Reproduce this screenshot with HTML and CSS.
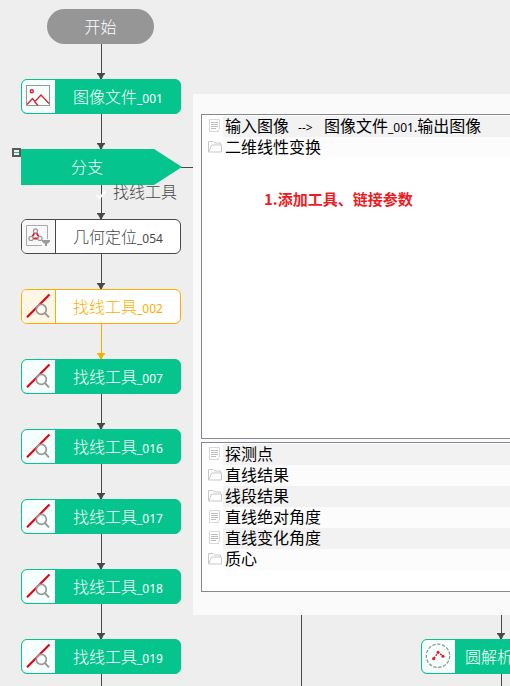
FILE: index.html
```
<!DOCTYPE html>
<html lang="zh-CN">
<head>
<meta charset="utf-8">
<title>流程图</title>
<link rel="stylesheet" href="styles.css">
</head>
<body>
<svg class="defs" width="0" height="0" aria-hidden="true">
  <symbol id="arrow" viewBox="0 0 8 7"><path d="M0 0H8V1.5H7L5 5.5V7H3V5.5L1 1.5H0Z"/></symbol>
  <symbol id="i-line" viewBox="0 0 33 33">
    <path d="M5 27.3 27.5 4.500" stroke="#e60012" stroke-width="2.1" fill="none"/>
    <circle cx="19.3" cy="19.4" r="5" fill="#fff" fill-opacity=".5" stroke="#999" stroke-width="1.7"/>
    <path d="M23 23.100 27 27.400" stroke="#999" stroke-width="2"/>
  </symbol>
  <symbol id="i-image" viewBox="0 0 33 33">
    <path d="M4.5 5.500H27.5V25.500H4.5Z" fill="none" stroke="#999" stroke-width="1.1"/>
    <circle cx="9.8" cy="11.3" r="1.5" fill="none" stroke="#e21f30" stroke-width="1.4"/>
    <path d="M5 24.500 10.5 18.500 13 21.500 19 15 27 23.500M12.5 21.500 16 25.500" fill="none" stroke="#e21f30" stroke-width="1.3"/>
  </symbol>
  <symbol id="i-locate" viewBox="0 0 33 33">
    <path d="M4.5 25.5V5.5H25.5V19M4.5 25.5H20" fill="none" stroke="#aaa"/>
    <path d="M13.5 11.5 9 18.5H18Z" fill="none" stroke="#e21f30" stroke-width="1.8"/>
    <g fill="#f5eeee" stroke="#999" stroke-width="1.1"><circle cx="13.5" cy="11" r="2.1"/><circle cx="9" cy="18.4" r="2.1"/><circle cx="18" cy="18.4" r="2.1"/></g>
    <path d="M20 20H28V21.500L26 23.500H25V26H23V23.500H22L20 21.500Z" fill="#999"/>
  </symbol>
  <symbol id="i-circle" viewBox="0 0 33 33">
    <circle cx="16" cy="15.8" r="11.7" fill="none" stroke="#999" stroke-width="1.3" stroke-dasharray="3.4 1.5"/>
    <path d="M12 18.500 16 12.500 21 16" fill="none" stroke="#e6192b" stroke-width="1.3" stroke-dasharray="2.2 1"/>
    <g fill="#e6192b"><circle cx="11.7" cy="18.700" r="1.6"/><circle cx="16" cy="12.200" r="1.5"/><circle cx="21" cy="16.200" r="1.5"/></g>
  </symbol>
  <symbol id="i-doc" viewBox="0 0 14 14">
    <path d="M1.5 .5H11.5V10M1.5 .5V12.5H11M11.5 10 9 12.5" fill="none" stroke="#d8d8d8"/>
    <path d="M3 3.5H10M3 5.5H10M3 7.5H10M3 9.5H8" stroke="#bdbdbd"/>
  </symbol>
  <symbol id="i-folder" viewBox="0 0 14 14">
    <path d="M.5 12V1.5H5L6.5 3H12.5V5M.5 12H13.5V5H3.5L1 11.500" fill="none" stroke="#c9c9c9"/>
  </symbol>
</svg>

<main class="canvas">
  <svg class="wires" width="510" height="686" aria-hidden="true">
    <g class="wire">
      <path d="M101.5 44V75M101.5 114V145M101.5 185V215M101.5 254V285M101.5 394V425M101.5 464V495M101.5 534V565M101.5 604V635M101.5 674V686M181 167.5H194M301.5 614V686M501.5 614V635M501.5 674V686"/>
    </g>
    <g class="wire wire-active"><path d="M101.5 324V355"/></g>
    <g class="heads">
      <use href="#arrow" x="97" y="73" width="8" height="7"/>
      <use href="#arrow" x="97" y="143" width="8" height="7"/>
      <use href="#arrow" x="97" y="213" width="8" height="7"/>
      <use href="#arrow" x="97" y="283" width="8" height="7"/>
      <use href="#arrow" class="head-active" x="97" y="353" width="8" height="7"/>
      <use href="#arrow" x="97" y="423" width="8" height="7"/>
      <use href="#arrow" x="97" y="493" width="8" height="7"/>
      <use href="#arrow" x="97" y="563" width="8" height="7"/>
      <use href="#arrow" x="97" y="633" width="8" height="7"/>
      <use href="#arrow" x="497" y="633" width="8" height="7"/>
    </g>
    <path class="branch-shape" d="M21 149H154L182 167 154 185H21Z"/>
    <path class="check" d="M96.500 195 99.500 198 105.500 191.500"/>
    <path class="toggle" d="M13 149H20V156H13Z"/>
    <path class="toggle-bar" d="M14 152.500H19"/>
  </svg>

  <div class="start">开始</div>
  <div class="branch">分支</div>
  <div class="wire-label">找线工具</div>

  <div class="node n1"><svg class="icon"><use href="#i-image"/></svg><span class="name">图像文件<small>_001</small></span></div>
  <div class="node plain n3"><svg class="icon"><use href="#i-locate" width="33" height="33"/></svg><span class="name">几何定位<small>_054</small></span></div>
  <div class="node active n4"><svg class="icon"><use href="#i-line" width="33" height="33"/></svg><span class="name">找线工具<small>_002</small></span></div>
  <div class="node n5"><svg class="icon"><use href="#i-line"/></svg><span class="name">找线工具<small>_007</small></span></div>
  <div class="node n6"><svg class="icon"><use href="#i-line"/></svg><span class="name">找线工具<small>_016</small></span></div>
  <div class="node n7"><svg class="icon"><use href="#i-line"/></svg><span class="name">找线工具<small>_017</small></span></div>
  <div class="node n8"><svg class="icon"><use href="#i-line"/></svg><span class="name">找线工具<small>_018</small></span></div>
  <div class="node n9"><svg class="icon"><use href="#i-line"/></svg><span class="name">找线工具<small>_019</small></span></div>
  <div class="node n10"><svg class="icon"><use href="#i-circle"/></svg><span class="name">圆解析</span></div>

  <section class="popup">
    <div class="list inputs">
      <div class="row"><svg class="mark"><use href="#i-doc"/></svg><span class="text">输入图像<small class="link">--&gt;</small>图像文件<small>_001.</small>输出图像</span></div>
      <div class="row"><svg class="mark"><use href="#i-folder"/></svg><span class="text">二维线性变换</span></div>
      <p class="note">1.添加工具、链接参数</p>
    </div>
    <div class="list outputs">
      <div class="row"><svg class="mark"><use href="#i-doc"/></svg><span class="text">探测点</span></div>
      <div class="row"><svg class="mark"><use href="#i-folder"/></svg><span class="text">直线结果</span></div>
      <div class="row"><svg class="mark"><use href="#i-folder"/></svg><span class="text">线段结果</span></div>
      <div class="row"><svg class="mark"><use href="#i-doc"/></svg><span class="text">直线绝对角度</span></div>
      <div class="row"><svg class="mark"><use href="#i-doc"/></svg><span class="text">直线变化角度</span></div>
      <div class="row"><svg class="mark"><use href="#i-folder"/></svg><span class="text">质心</span></div>
    </div>
  </section>
</main>
</body>
</html>
```
FILE: styles.css
```
* { box-sizing: border-box; }
body {
  margin: 0;
  font: 300 16px/20px "Noto Sans CJK SC", "Noto Sans", sans-serif;
}
small { font: 400 12px/1 "Noto Sans", sans-serif; }
.defs { position: absolute; }
.canvas {
  position: relative;
  width: 510px;
  height: 686px;
  overflow: hidden;
  background: #eee;
  white-space: nowrap;
}
.wires { display: block; }
.wire { stroke: #484848; fill: none; }
.wire-active { stroke: #faaf00; }
.heads { fill: #484848; }
.head-active { fill: #faaf00; }
.branch-shape { fill: #05c48d; }
.check { fill: none; stroke: #fff; stroke-width: 2; }
.toggle { fill: #eee; stroke: #5a5a5a; stroke-width: 2; }
.toggle-bar { stroke: #05c48d; }

.start, .branch {
  position: absolute;
  display: flex;
  align-items: center;
  justify-content: center;
  padding-bottom: 2px;
  color: #fff;
}
.start {
  left: 47px;
  top: 9px;
  width: 107px;
  height: 35px;
  border-radius: 18px;
  background: #969696;
}
.branch { left: 21px; top: 149px; width: 132px; height: 36px; }
.wire-label { position: absolute; left: 113px; top: 181px; color: #484848; }

.node {
  position: absolute;
  left: 21px;
  display: flex;
  width: 160px;
  height: 35px;
  overflow: hidden;
  border: 1px solid #05c48d;
  border-radius: 6px;
  background: #05c48d;
  color: #fff;
}
.node .icon { flex: none; width: 33px; height: 33px; background: #f5fffc; }
.name { flex: 1; padding: 6px 0 0 18px; }
.plain { border-color: #484848; background: #fff; color: #484848; }
.plain .icon { width: 34px; border-right: 1px solid #484848; background: #f8f8f8; }
.active { border-color: #faaf00; background: #fff; color: #faaf00; }
.active .icon { width: 34px; border-right: 1px solid #faaf00; background: #fff7e6; }
.plain .name, .active .name { padding-left: 17px; }
.n1 { top: 79px; }
.n3 { top: 219px; }
.n4 { top: 289px; }
.n5 { top: 359px; }
.n6 { top: 429px; }
.n7 { top: 499px; }
.n8 { top: 569px; }
.n9 { top: 639px; }
.n10 { left: 421px; top: 639px; }
.n10 .name { padding-left: 10px; }

.popup {
  position: absolute;
  left: 193px;
  top: 94px;
  width: 330px;
  height: 521px;
  display: flex;
  flex-direction: column;
  gap: 3px;
  padding: 20px 0 23px 8px;
  background: #fafafa;
  color: #000;
}
.list { border: 1px solid #828790; background: #fff; padding-top: 1px; }
.inputs { height: 325px; }
.outputs { height: 150px; }
.row { display: flex; height: 21px; font-weight: 400; }
.mark { flex: none; width: 14px; height: 14px; margin: 3px 1px 0 6px; }
.text { flex: 1; padding-left: 2px; background: #fcfcfc; line-height: 19px; }
.row:nth-child(odd) .text { background: #f2f2f2; }
.link { display: inline-block; width: 35px; padding-left: 9px; }
.note {
  margin: 31px 0 0 62px;
  color: #ed1c24;
  font-size: 15px;
  font-weight: 700;
}
```
